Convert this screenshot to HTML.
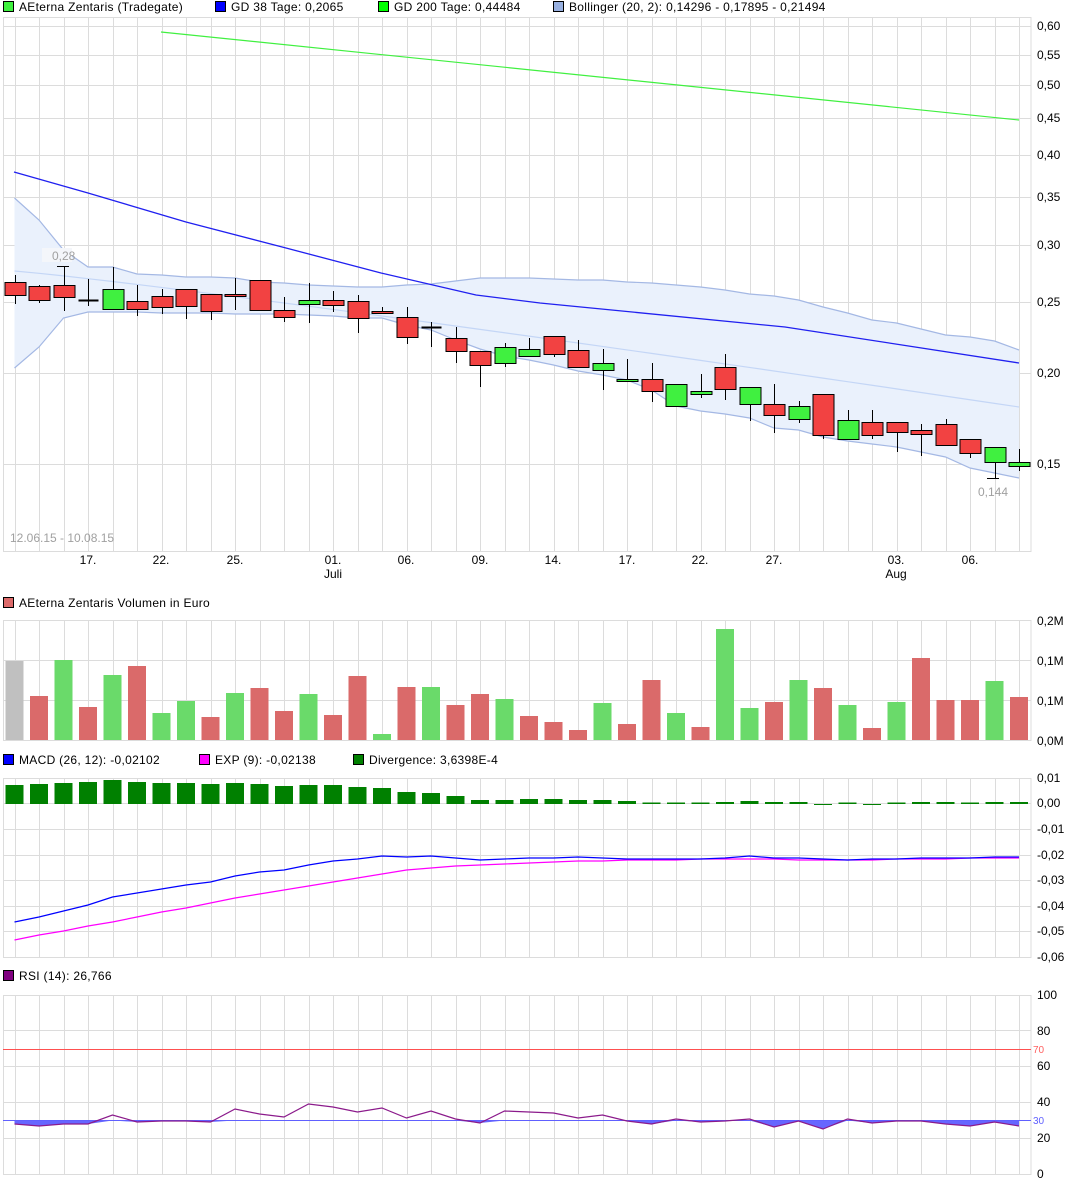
<!DOCTYPE html>
<html><head><meta charset="utf-8"><style>
html,body{margin:0;padding:0;background:#fff;}
svg{display:block;font-family:"Liberation Sans",sans-serif;font-size:12px;}
.lg{fill:#000;font-size:12px;letter-spacing:0.3px}
.ax{fill:#000;font-size:12px}
</style></head><body>
<svg id="s" width="1089" height="1188" xmlns="http://www.w3.org/2000/svg">
<g id="grid"></g>
<g id="draw"></g>
<!-- legends -->
<rect x="3.5" y="1.5" width="10" height="10" fill="#3ef03e" stroke="#000"/>
<text class="lg" x="19" y="11">AEterna Zentaris (Tradegate)</text>
<rect x="215.5" y="1.5" width="10" height="10" fill="#0000ff" stroke="#000"/>
<text class="lg" x="231" y="11">GD 38 Tage: 0,2065</text>
<rect x="378.5" y="1.5" width="10" height="10" fill="#00ff00" stroke="#000"/>
<text class="lg" x="394" y="11">GD 200 Tage: 0,44484</text>
<rect x="553.5" y="1.5" width="10" height="10" fill="#98b0e0" stroke="#000"/>
<text class="lg" x="569" y="11">Bollinger (20, 2): 0,14296 - 0,17895 - 0,21494</text>

<rect x="3.5" y="597.5" width="10" height="10" fill="#dc6a6a" stroke="#000"/>
<text class="lg" x="19" y="607">AEterna Zentaris Volumen in Euro</text>

<rect x="3.5" y="754.5" width="10" height="10" fill="#0000ff" stroke="#000"/>
<text class="lg" x="19" y="764">MACD (26, 12): -0,02102</text>
<rect x="199.5" y="754.5" width="10" height="10" fill="#ff00ff" stroke="#000"/>
<text class="lg" x="215" y="764">EXP (9): -0,02138</text>
<rect x="353.5" y="754.5" width="10" height="10" fill="#008000" stroke="#000"/>
<text class="lg" x="369" y="764">Divergence: 3,6398E-4</text>

<rect x="3.5" y="970.5" width="10" height="10" fill="#800080" stroke="#000"/>
<text class="lg" x="19" y="980">RSI (14): 26,766</text>

<!-- price axis -->
<g class="ax">
<text x="1037" y="30">0,60</text><text x="1037" y="59">0,55</text><text x="1037" y="89">0,50</text>
<text x="1037" y="122">0,45</text><text x="1037" y="159">0,40</text><text x="1037" y="201">0,35</text>
<text x="1037" y="249">0,30</text><text x="1037" y="306">0,25</text><text x="1037" y="377">0,20</text>
<text x="1037" y="468">0,15</text>
<text x="1037" y="625">0,2M</text><text x="1037" y="665">0,1M</text><text x="1037" y="705">0,1M</text><text x="1037" y="745">0,0M</text>
<text x="1037" y="782">0,01</text><text x="1037" y="807">0,00</text><text x="1037" y="833">-0,01</text>
<text x="1037" y="859">-0,02</text><text x="1037" y="884">-0,03</text><text x="1037" y="910">-0,04</text>
<text x="1037" y="935">-0,05</text><text x="1037" y="961">-0,06</text>
<text x="1037" y="999">100</text><text x="1037" y="1035">80</text><text x="1037" y="1070">60</text>
<text x="1037" y="1106">40</text><text x="1037" y="1142">20</text><text x="1037" y="1178">0</text>
<text x="1033" y="1053" fill="#ff6060" style="font-size:10px">70</text>
<text x="1033" y="1124" fill="#6060ff" style="font-size:10px">30</text>
</g>
<!-- date axis -->
<g class="ax" text-anchor="middle">
<text x="88" y="564">17.</text><text x="161" y="564">22.</text><text x="235" y="564">25.</text>
<text x="333" y="564">01.</text><text x="406" y="564">06.</text><text x="480" y="564">09.</text>
<text x="553" y="564">14.</text><text x="627" y="564">17.</text><text x="700" y="564">22.</text>
<text x="774" y="564">27.</text><text x="896" y="564">03.</text><text x="970" y="564">06.</text>
<text x="333" y="578">Juli</text><text x="896" y="578">Aug</text>
</g>
<text x="10" y="542" fill="#a0a0a0">12.06.15 - 10.08.15</text>
<rect x="42" y="248" width="30" height="14" fill="#f4f6fa"/>
<text x="52" y="260" fill="#a0a0a0">0,28</text>
<text x="978" y="496" fill="#a0a0a0">0,144</text>
</svg>
<script>
var NS="http://www.w3.org/2000/svg";
var G=document.getElementById('grid'),D=document.getElementById('draw');
function el(p,t,a){var e=document.createElementNS(NS,t);for(var k in a)e.setAttribute(k,a[k]);p.appendChild(e);return e;}
function X(i){return 14.5+i*24.5;}
function pts(a){return a.map(function(y,i){return X(i)+','+y;}).join(' ');}
var gc="#dcdcdc";
var panels=[[17,551,[26,55,85,118,155,197,245,302,373,464]],[620,740,[660,700]],[778,957,[803,829,855,880,906,931]],[995,1174,[1030,1066,1102,1138]]];
panels.forEach(function(p){
 el(G,'rect',{x:3.5,y:p[0]+.5,width:1027.5,height:p[1]-p[0],fill:'none',stroke:gc});
 p[2].forEach(function(y){el(G,'line',{x1:3,x2:1031,y1:y+.5,y2:y+.5,stroke:gc});});
 for(var i=0;i<42;i++){el(G,'line',{x1:Math.round(X(i))+.5,x2:Math.round(X(i))+.5,y1:p[0],y2:p[1],stroke:gc});}
});
var up=[198,220,250,267,267,274,275,277,277,278,282,283,285,286,287,287,285,284,281,278,278,278,279,280,280,282,283,285,287,290,294,296,300,307,313,320,323,329,335,337,341,350];
var lo=[368,347,318,312,312,312,313,313,313,314,314,314,315,316,318,318,325,330,340,349,356,360,365,371,375,380,390,406,411,414,418,428,430,437,441,444,447,452,457,468,473,478];
var mid=up.map(function(u,i){return 271+ (407-271)*Math.pow(i/41,1.1);});
var poly=up.map(function(y,i){return X(i)+','+y;}).concat(lo.slice().reverse().map(function(y,j){return X(41-j)+','+y;})).join(' ');
el(D,'polygon',{points:poly,fill:'#eaf1fc'});
el(D,'polyline',{points:pts(up),fill:'none',stroke:'#a4b8e4','stroke-width':1.2});
el(D,'polyline',{points:pts(lo),fill:'none',stroke:'#a4b8e4','stroke-width':1.2});
el(D,'polyline',{points:pts(mid),fill:'none',stroke:'#c4d6f6','stroke-width':1.2});
el(D,'line',{x1:161,y1:32,x2:1019,y2:120,stroke:'#40f040','stroke-width':1.2});
el(D,'polyline',{points:'14,172 88,193 186,222 286,248 381,273 476,295 540,303 785,327 1019,363',fill:'none',stroke:'#2020f0','stroke-width':1.3});
var C=[['r',282,295,275,304],['r',286,300,285,303],['r',285,297,266,311],['k',300,300,279,306],['g',289,309,267,309],['r',301,309,285,316],['r',296,307,289,314],['r',289,306,289,319],['r',294,311,294,320],['r',294,296,278,310],['r',280,310,280,311],['r',310,317,297,322],['g',300,304,283,323],['r',300,305,291,312],['r',301,318,295,333],['r',311,313,307,313],['r',317,337,307,344],['k',327,327,322,347],['r',338,351,327,363],['r',351,365,351,387],['g',347,363,343,367],
['g',349,356,338,356],['r',336,354,336,357],['r',350,367,340,367],['g',363,370,349,390],['g',379,381,359,381],['r',379,391,363,402],['g',384,406,384,406],['g',391,394,374,398],['r',367,389,354,400],['g',387,404,387,421],['r',404,415,384,433],['g',406,419,401,423],['r',394,435,394,439],['g',420,439,410,439],['r',422,435,410,439],['r',422,432,422,452],['r',430,434,424,456],['r',424,445,419,445],['r',439,453,439,458],['g',447,462,447,478],['g',462,466,449,471]];
C.forEach(function(c,i){var x=Math.round(X(i))+.5;
 el(D,'line',{x1:x,x2:x,y1:c[3],y2:c[4],stroke:'#000'});
 if(c[0]=='k'){el(D,'line',{x1:x-10,x2:x+10,y1:c[1]+.5,y2:c[1]+.5,stroke:'#000','stroke-width':2});}
 else el(D,'rect',{x:x-10.5,y:c[1]+.5,width:21,height:Math.max(c[2]-c[1],2),fill:c[0]=='r'?'#f24242':'#40f040',stroke:'#000'});
});
el(D,'line',{x1:57,x2:69,y1:266.5,y2:266.5,stroke:'#000'});
el(D,'line',{x1:987,x2:999,y1:478.5,y2:478.5,stroke:'#000'});
var V=[['k',661],['r',696],['g',660],['r',707],['g',675],['r',666],['g',713],['g',701],['r',717],['g',693],['r',688],['r',711],['g',694],['r',715],['r',676],['g',734],['r',687],['g',687],['r',705],['r',694],['g',699],['r',716],['r',722],['r',730],['g',703],['r',724],['r',680],['g',713],['r',727],['g',629],['g',708],['r',702],['g',680],['r',688],['g',705],['r',728],['g',702],['r',658],['r',700],['r',700],['g',681],['r',697]];
V.forEach(function(v,i){el(D,'rect',{x:X(i)-9,y:v[1],width:18,height:740-v[1],fill:v[0]=='k'?'#c0c0c0':v[0]=='r'?'#da6a6a':'#6ada6a'});});
var Dv=[785,784,783,782,780,782,783,783,784,783,784,786,785,785,787,788,792,793,796,800,800,799,799,800,800,801,802.5,802.5,802.5,802,801,802,802,805,802.5,805,802.5,802,802,802.5,802,802];
Dv.forEach(function(t,i){var z=804;var y=Math.min(t,z),h=Math.max(Math.abs(z-t),1);el(D,'rect',{x:X(i)-9,y:y,width:18,height:h,fill:'#008000'});});
var M=[922,917,911,905,897,893,889,885,882,876,872,870,865,861,859,856,857,856,858,860,859,858,858,857,858,859,859,859,859,858,856,858,858,859,860,859,859,858,858,858,857,857];
var E=[940,935,931,926,922,917,912,908,903,898,894,890,886,882,878,874,870,868,866,865,864,863,862,861,861,860,860,860,859,859,859,859,860,860,860,860,859,859,859,858,858,858];
el(D,'polyline',{points:pts(E),fill:'none',stroke:'#ff00ff','stroke-width':1.2});
el(D,'polyline',{points:pts(M),fill:'none',stroke:'#0000ff','stroke-width':1.2});
var R=[1124,1126,1124,1124,1115,1122,1121,1121,1122,1109,1114,1117,1104,1107,1112,1108,1118,1111,1119,1123,1111,1112,1113,1118,1115,1121,1124,1119,1122,1121,1119,1127,1121,1129,1119,1123,1121,1121,1124,1126,1122,1126];
var fp=[X(0)+',1120.5'].concat(R.map(function(y,i){return X(i)+','+Math.max(y,1120.5);})).concat([X(41)+',1120.5']).join(' ');
el(D,'polygon',{points:fp,fill:'#6666ff'});
el(D,'line',{x1:3,x2:1031,y1:1049.5,y2:1049.5,stroke:'#ff5050'});
el(D,'line',{x1:3,x2:1031,y1:1120.5,y2:1120.5,stroke:'#6060ff'});
el(D,'polyline',{points:pts(R),fill:'none',stroke:'#8b1a8b','stroke-width':1.2});
</script>
</body></html>
